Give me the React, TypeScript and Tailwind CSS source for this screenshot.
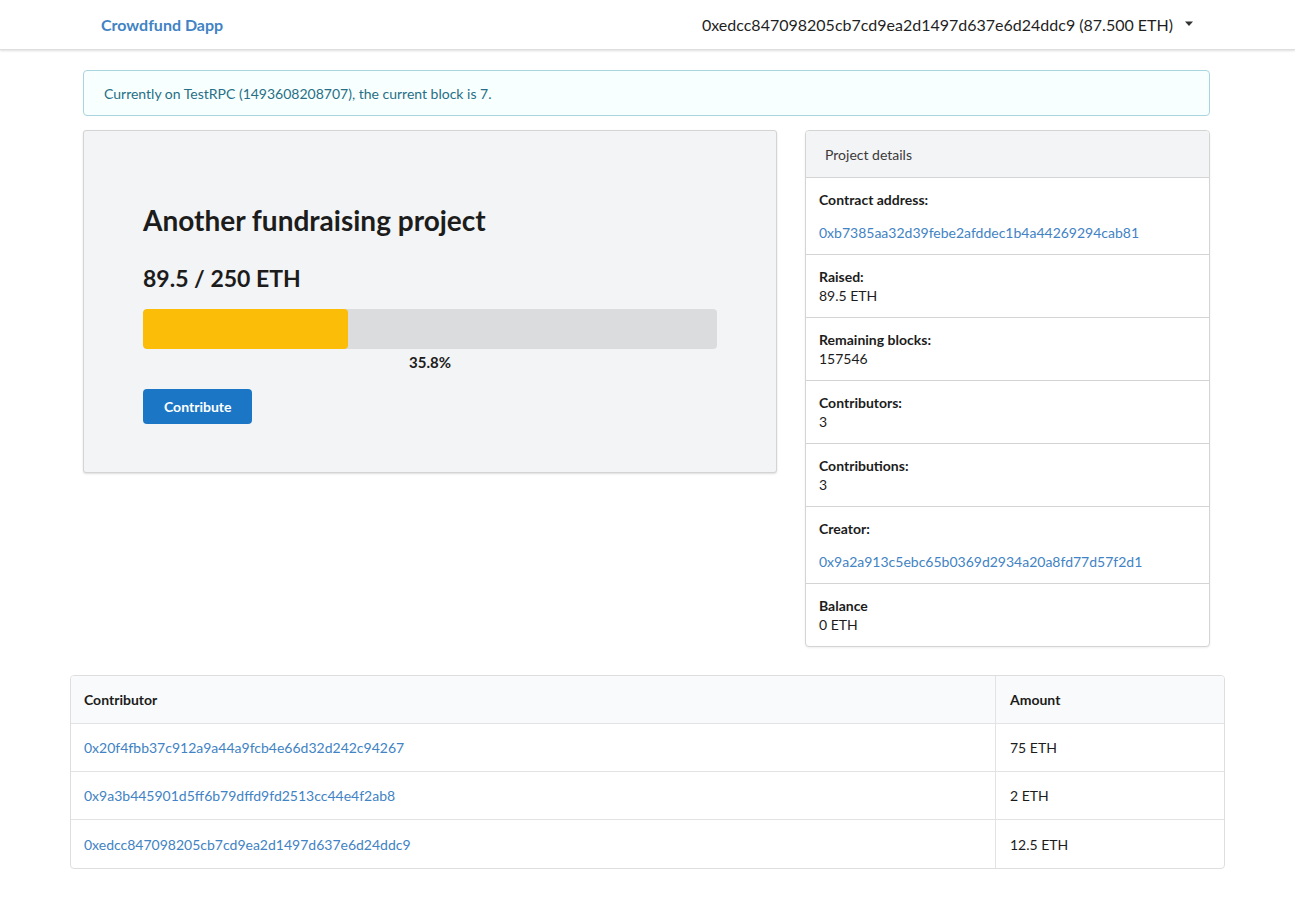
import { Fragment } from "react";

const details = [
  { label: "Contract address:", value: "0xb7385aa32d39febe2afddec1b4a44269294cab81", link: true },
  { label: "Raised:", value: "89.5 ETH" },
  { label: "Remaining blocks:", value: "157546" },
  { label: "Contributors:", value: "3" },
  { label: "Contributions:", value: "3" },
  { label: "Creator:", value: "0x9a2a913c5ebc65b0369d2934a20a8fd77d57f2d1", link: true },
  { label: "Balance", value: "0 ETH" },
];

const contributions = [
  { address: "0x20f4fbb37c912a9a44a9fcb4e66d32d242c94267", amount: "75 ETH" },
  { address: "0x9a3b445901d5ff6b79dffd9fd2513cc44e4f2ab8", amount: "2 ETH" },
  { address: "0xedcc847098205cb7cd9ea2d1497d637e6d24ddc9", amount: "12.5 ETH" },
];

export default function App() {
  const raised = 89.5;
  const goal = 250;
  const pct = (raised / goal) * 100;

  return (
    <div className="min-h-screen bg-white text-[14px] text-[#212121] [font-family:Lato,'Noto_Sans',sans-serif]">
      {/* Top menu */}
      <div className="h-[50px] bg-white shadow-[0_1px_2px_0_rgba(34,36,38,0.15)] border-b border-[#dededf]">
        <div className="mx-auto flex h-full w-[1129px] items-center justify-between pl-[18px] pr-[18px]">
          <a className="text-[16px] font-bold text-[#4183c4]">Crowdfund Dapp</a>
          <div className="flex items-center gap-[11px] text-[16px] text-[#1f1f1f]">
            <span>0xedcc847098205cb7cd9ea2d1497d637e6d24ddc9 (87.500 ETH)</span>
            <svg width="10" height="6" viewBox="0 0 10 6" className="mt-[-2px]">
              <path d="M1 0.5h8L5 5z" fill="#333" />
            </svg>
          </div>
        </div>
      </div>

      <div className="mx-auto mt-[20px] w-[1129px]">
        {/* Network message */}
        <div className="flex h-[46px] w-[1127px] items-center rounded-[4px] border border-[#a9d5de] bg-[#f8ffff] px-[20px] text-[14px] text-[#276f86]">
          Currently on TestRPC (1493608208707), the current block is 7.
        </div>

        <div className="mt-[14px] flex items-start gap-[28px]">
          {/* Project card */}
          <div className="w-[694px] rounded-[3px] border border-[#d4d4d5] bg-[#f3f4f5] pl-[59px] pr-[60px] pt-[72px] pb-[48px] shadow-[0_1px_2px_0_rgba(34,36,38,0.15)]">
            <h1 className="text-[28px] font-bold leading-[34px] text-[#1c1c1c]">Another fundraising project</h1>
            <h2 className="mt-[26px] text-[23px] font-bold leading-[30px] text-[#1c1c1c]">89.5 / 250 ETH</h2>
            <div className="mt-[16px] h-[40px] w-[574px] overflow-hidden rounded-[4px] bg-[#dbdcdd]">
              <div className="h-full rounded-[4px] bg-[#fbbd08]" style={{ width: `${pct}%` }} />
            </div>
            <div className="mt-[3px] w-[574px] text-center text-[15px] font-bold leading-[20px] text-[#1c1c1c]">35.8%</div>
            <button className="mt-[17px] h-[35px] rounded-[4px] bg-[#1b77c5] px-[21px] text-[14px] font-bold text-white">
              Contribute
            </button>
          </div>

          {/* Details card */}
          <div className="w-[405px] overflow-hidden rounded-[4px] border border-[#d4d4d5] bg-white shadow-[0_1px_2px_0_rgba(34,36,38,0.08)]">
            <div className="flex h-[47px] items-center border-b border-[#d4d4d5] bg-[#f3f4f5] px-[19px] text-[14px] text-[#3a3a3a]">
              Project details
            </div>
            {details.map((d, i) => (
              <div
                key={d.label}
                className={`px-[13px] pt-[12px] pb-[12px] ${i < details.length - 1 ? "border-b border-[#d4d4d5]" : ""}`}
              >
                <div className="text-[14px] font-bold leading-[19px] text-[#1c1c1c]">{d.label}</div>
                {d.link ? (
                  <a className="mt-[14px] block text-[14px] leading-[19px] text-[#4183c4]">{d.value}</a>
                ) : (
                  <div className="text-[14px] leading-[19px] text-[#1c1c1c]">{d.value}</div>
                )}
              </div>
            ))}
          </div>
        </div>
      </div>

      {/* Contributions table */}
      <div className="mx-auto mt-[28px] w-[1155px] overflow-hidden rounded-[4px] border border-[#dedede]">
        <div className="grid grid-cols-[925px_1fr]">
          <div className="flex h-[48px] items-center border-b border-r border-[#e3e3e3] bg-[#f9fafb] px-[13px] font-bold text-[#1c1c1c]">
            Contributor
          </div>
          <div className="flex h-[48px] items-center border-b border-[#e3e3e3] bg-[#f9fafb] px-[14px] font-bold text-[#1c1c1c]">
            Amount
          </div>
          {contributions.map((c, i) => {
            const last = i === contributions.length - 1;
            return (
              <Fragment key={c.address}>
                <div className={`flex h-[48px] items-center border-r border-[#e3e3e3] px-[13px] ${last ? "" : "border-b"}`}>
                  <a className="text-[#4183c4]">{c.address}</a>
                </div>
                <div className={`flex h-[48px] items-center border-[#e3e3e3] px-[14px] text-[#1c1c1c] ${last ? "" : "border-b"}`}>
                  {c.amount}
                </div>
              </Fragment>
            );
          })}
        </div>
      </div>
    </div>
  );
}
